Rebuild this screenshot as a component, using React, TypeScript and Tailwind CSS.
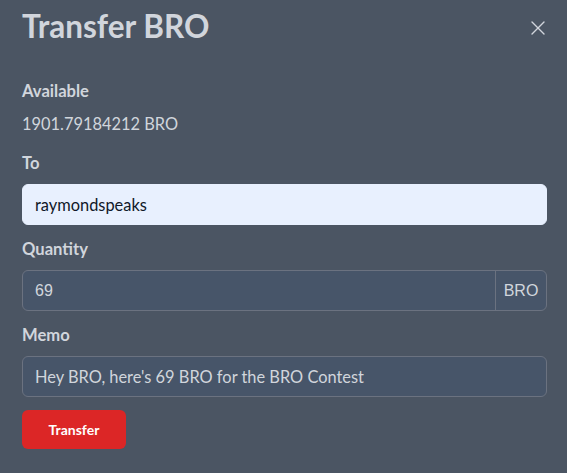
import { X } from "lucide-react";

const font = { fontFamily: "Lato, 'Noto Sans', sans-serif" };

function Label({ children }: { children: React.ReactNode }) {
  return <div className="text-[16.6px] font-bold leading-6 text-gray-300">{children}</div>;
}

export default function App() {
  return (
    <div className="min-h-[473px] w-[567px] bg-[#4b5563] pt-2 pr-5 pb-6 pl-[22px]" style={font}>
      <div className="flex h-9 items-start justify-between">
        <h1 className="text-[31.5px] font-bold leading-9 text-gray-300">Transfer BRO</h1>
        <button className="-mr-[3px] mt-2 text-gray-300">
          <X className="size-6" strokeWidth={1.4} />
        </button>
      </div>

      <div className="mt-[35px]">
        <Label>Available</Label>
        <div className="mt-[9px] text-[16.4px] leading-6 text-gray-300">1901.79184212 BRO</div>
      </div>

      <div className="mt-[15px]">
        <Label>To</Label>
        <input
          readOnly
          value="raymondspeaks"
          className="mt-[9px] block h-[41px] w-full rounded-md border border-[#e8f0fe] bg-[#e8f0fe] px-3 text-[16.4px] text-gray-900 outline-none"
          style={font}
        />
      </div>

      <div className="mt-3">
        <Label>Quantity</Label>
        <div className="mt-[9px] flex h-[41px] w-full overflow-hidden rounded-md border border-[#6b7280] bg-[#475569]">
          <input
            readOnly
            value="69"
            className="min-w-0 flex-1 bg-transparent px-3 text-[16px] text-gray-300 outline-none"
            style={{ fontFamily: "'Liberation Sans', Arial, sans-serif" }}
          />
          <span
            className="flex w-[51px] items-center justify-center border-l border-[#6b7280] text-[16px] text-gray-300"
            style={{ fontFamily: "'Liberation Sans', Arial, sans-serif" }}
          >
            BRO
          </span>
        </div>
      </div>

      <div className="mt-3">
        <Label>Memo</Label>
        <input
          readOnly
          value="Hey BRO, here's 69 BRO for the BRO Contest"
          className="mt-[9px] block h-[41px] w-full rounded-md border border-[#6b7280] bg-[#475569] px-3 text-[16.4px] text-gray-300 outline-none"
          style={font}
        />
      </div>

      <button className="mt-[13px] h-[39px] w-[104px] rounded-md bg-[#dc2626] text-[14px] font-bold text-white">
        Transfer
      </button>
    </div>
  );
}
